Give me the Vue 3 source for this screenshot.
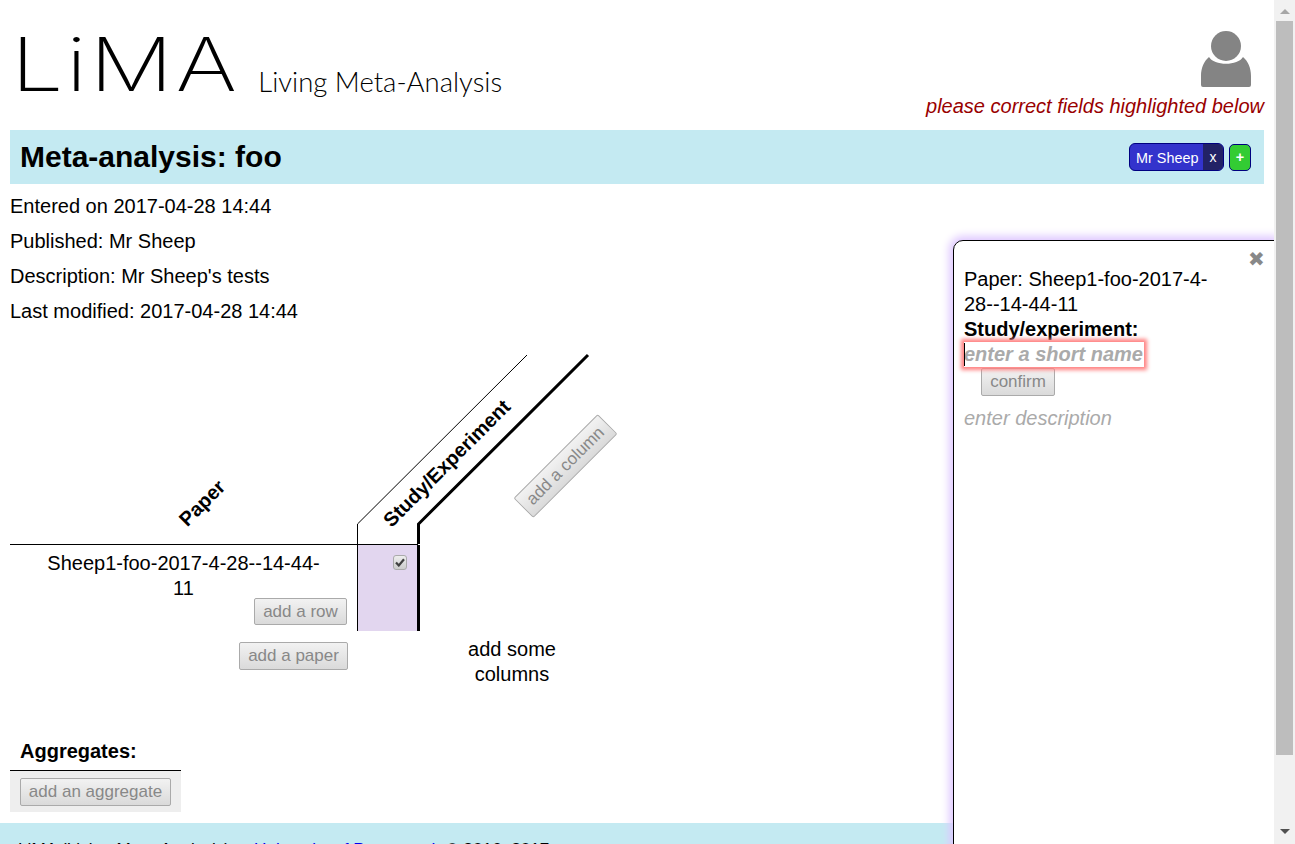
<script setup>
const details = [
  'Entered on 2017-04-28 14:44',
  'Published: Mr Sheep',
  "Description: Mr Sheep's tests",
  'Last modified: 2017-04-28 14:44',
]
</script>

<template>
  <div class="page">
    <div class="main">
      <header class="top">
        <div class="brand">
          <span class="logo">LiMA</span>
          <span class="tagline">Living Meta-Analysis</span>
        </div>
        <div class="user">
          <svg class="avatar" width="50" height="58" viewBox="0 0 50 58">
            <circle cx="25" cy="16" r="15" fill="#848484" />
            <path d="M8 27 C13 36 37 36 42 27 C47 31 50 38 50 46 L50 55 Q50 57 48 57 L2 57 Q0 57 0 55 L0 46 C0 38 3 31 8 27 Z" fill="#848484" />
          </svg>
          <div class="error">please correct fields highlighted below</div>
        </div>
      </header>

      <div class="titlebar">
        <h1>Meta-analysis: foo</h1>
        <div class="tags">
          <span class="tag"><span class="tag-name">Mr Sheep</span><span class="tag-x">x</span></span>
          <span class="add">+</span>
        </div>
      </div>

      <div class="details">
        <p v-for="d in details" :key="d">{{ d }}</p>
      </div>

      <div class="table">
        <div class="thead">
          <svg class="diagonals" width="600" height="200" viewBox="0 0 600 200">
            <path d="M347.5 199 L347.5 179 L517 10" fill="none" stroke="#000" stroke-width="1" />
            <path d="M408.5 199 L408.5 179 L578 10" fill="none" stroke="#000" stroke-width="3" />
          </svg>
          <span class="rot paper-h">Paper</span>
          <span class="rot study-h">Study/Experiment</span>
          <button class="btn rot add-col">add a column</button>
        </div>
        <div class="row">
          <div class="paper-cell">
            <div class="paper-name">Sheep1-foo-2017-4-28--14-44-11</div>
            <button class="btn add-row">add a row</button>
          </div>
          <div class="study-cell">
            <span class="check">
              <svg width="10" height="9" viewBox="0 0 10 9"><path d="M1 4.5 L3.8 7.5 L9 1.2" fill="none" stroke="#404040" stroke-width="2.2" /></svg>
            </span>
          </div>
        </div>
        <div class="after">
          <div class="after-left"><button class="btn add-paper">add a paper</button></div>
          <div class="no-cols">add some columns</div>
        </div>
      </div>

      <section class="aggregates">
        <div class="agg-title">Aggregates:</div>
        <div class="agg-box"><button class="btn add-agg">add an aggregate</button></div>
      </section>

      <footer class="footer">
        LiMA (Living Meta-Analysis) at <a>University of Portsmouth</a> © 2016–2017
      </footer>
    </div>

    <div class="scrollbar">
      <span class="arrow-up"></span>
      <span class="thumb"></span>
      <span class="arrow-down"></span>
    </div>

    <aside class="panel">
      <span class="close">✖</span>
      <div class="panel-body">
        <div>Paper: Sheep1-foo-2017-4-28--14-44-11</div>
        <div class="bold">Study/experiment:</div>
        <div class="field"><span class="caret"></span>enter a short name</div>
        <button class="btn confirm">confirm</button>
        <div class="desc">enter description</div>
      </div>
    </aside>
  </div>
</template>

<style>
html, body { margin: 0; overflow: hidden; background: #fff; }
</style>

<style scoped>
.page {
  position: relative;
  display: flex;
  width: 1295px;
  height: 844px;
  overflow: hidden;
  font-family: "Liberation Sans", Arial, sans-serif;
  font-size: 20px;
  color: #000;
  background: #fff;
}
.main { width: 1274px; flex: none; padding: 0 10px; box-sizing: border-box; }
.top { display: flex; justify-content: space-between; height: 130px; }
.brand { display: flex; align-items: baseline; padding: 20px 0 0 1px; height: 90px; }
.logo {
  display: inline-block;
  font-family: Inter, sans-serif;
  font-weight: 230;
  font-size: 74px;
  letter-spacing: 2px;
  line-height: 88px;
  transform: scaleX(1.26);
  transform-origin: left center;
}
.tagline {
  font-family: Lato, sans-serif;
  font-weight: 300;
  font-size: 27.5px;
  margin-left: 66px;
  transform: translateY(1px);
}
.user { display: flex; flex-direction: column; align-items: flex-end; padding-top: 30px; }
.avatar { margin-right: 13px; display: block; }
.error { color: #990000; font-style: italic; line-height: 23px; margin-top: 7px; }
.titlebar {
  display: flex;
  align-items: center;
  justify-content: space-between;
  height: 54px;
  background: #c4eaf2;
  padding: 0 13px 0 10px;
}
h1 { margin: 0; font-size: 30px; font-weight: bold; }
.tags { display: flex; align-items: center; gap: 5px; font-size: 14.4px; color: #fff; }
.tag {
  display: flex;
  height: 26px;
  width: 93px;
  border: 1px solid #000080;
  border-radius: 6px;
  background: #3333cc;
  overflow: hidden;
  line-height: 28px;
}
.tag-name { flex: 1; padding-left: 6px; }
.tag-x { width: 20px; background: #222266; text-align: center; font-size: 14px; line-height: 26px; }
.add {
  width: 20px;
  height: 25px;
  border: 1px solid #000080;
  border-radius: 5px;
  background: #33cc33;
  text-align: center;
  line-height: 25px;
  font-weight: bold;
}
.details { padding-top: 5px; }
.details p { margin: 0; line-height: 35px; }
.table { margin-top: 16px; }
.thead { position: relative; height: 199px; border-bottom: 1px solid #000; width: 408px; }
.diagonals { position: absolute; left: 0; top: 0; overflow: visible; }
.rot { position: absolute; transform: rotate(-45deg); white-space: nowrap; }
.paper-h { left: 165px; top: 148px; font-weight: bold; width: 52px; text-align: center; }
.study-h { left: 349px; top: 107px; font-weight: bold; width: 176px; text-align: center; transform-origin: center; }
.btn {
  display: block;
  box-sizing: border-box;
  margin: 0;
  padding: 0;
  font-family: "Liberation Sans", Arial, sans-serif;
  font-size: 17px;
  color: #888;
  border: 1px solid #aaa;
  border-radius: 2px;
  background: linear-gradient(#f2f2f2, #dadada);
}
.add-col { left: 496px; top: 107px; width: 119px; height: 28px; }
.row { display: flex; height: 86px; }
.paper-cell { width: 347px; box-sizing: border-box; padding-top: 6px; position: relative; }
.paper-name { line-height: 25px; text-align: center; padding: 0 30px; }
.add-row { width: 93px; height: 27px; margin: -3px 0 0 244px; }
.study-cell {
  width: 59px;
  border-left: 1px solid #000;
  border-right: 3px solid #000;
  background: #e2d6ef;
  position: relative;
}
.check {
  display: flex;
  align-items: center;
  justify-content: center;
  box-sizing: border-box;
  width: 14px;
  height: 15px;
  margin: 10px 0 0 35px;
  border: 1px solid #aaa;
  border-radius: 3px;
  background: linear-gradient(#eee, #ccc);
}
.after { display: flex; height: 108px; }
.after-left { width: 347px; padding-top: 11px; }
.add-paper { width: 109px; height: 28px; margin-left: 229px; }
.no-cols { width: 120px; margin: 6px 0 0 95px; text-align: center; line-height: 25px; }
.aggregates { width: 171px; }
.agg-title { font-weight: bold; line-height: 25px; padding: 0 0 6px 10px; }
.agg-box { border-top: 1px solid #000; background: #eee; padding: 7px 10px 6px; }
.add-agg { width: 151px; height: 28px; }
.footer {
  margin: 11px -10px 0;
  padding: 14px 18px;
  background: #c4eaf2;
  font-size: 17.2px;
  line-height: 25px;
  white-space: nowrap;
}
.footer a { color: #0000ee; }
.scrollbar {
  position: relative;
  width: 21px;
  flex: none;
  background: #f1f1f1;
  z-index: 2;
}
.thumb { position: absolute; left: 2px; top: 21px; width: 17px; height: 734px; background: #bdbdbd; }
.arrow-up, .arrow-down {
  position: absolute;
  left: 6px;
  width: 0;
  height: 0;
  border-left: 5px solid transparent;
  border-right: 5px solid transparent;
}
.arrow-up { top: 9px; border-bottom: 5px solid #a6a6a6; }
.arrow-down { top: 829px; border-top: 5px solid #505050; }
.panel {
  position: absolute;
  left: 953px;
  top: 240px;
  width: 322px;
  height: 610px;
  box-sizing: border-box;
  border: 1px solid #000;
  border-radius: 10px 0 0 0;
  background: #fff;
  box-shadow: 0 0 8px 4px #dfc8ff;
}
.close {
  position: absolute;
  right: 9px;
  top: 6px;
  font-size: 20px;
  line-height: 24px;
  color: #888;
}
.panel-body { width: 256px; padding: 26px 0 0 10px; line-height: 25px; }
.bold { font-weight: bold; }
.field {
  position: relative;
  width: 180px;
  height: 25px;
  font-weight: bold;
  font-style: italic;
  color: #aaa;
  white-space: nowrap;
  box-shadow: 0 0 4px 3px #ff8080;
}
.caret { position: absolute; left: 0; top: 1px; width: 1px; height: 23px; background: #000; }
.confirm { width: 74px; height: 28px; margin: 1px 0 0 17px; }
.desc { font-style: italic; color: #aaa; margin-top: 10px; }
</style>
